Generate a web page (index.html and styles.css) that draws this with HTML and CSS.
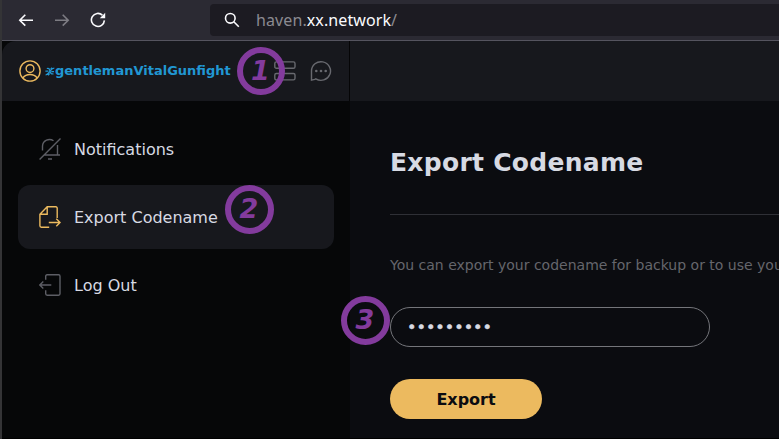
FILE: index.html
```html
<!DOCTYPE html>
<html lang="en">
<head>
<meta charset="utf-8">
<title>Export Codename</title>
<link rel="stylesheet" href="styles.css">
</head>
<body>
<div class="window">
  <header class="toolbar">
    <nav class="history">
      <svg class="nav-icon" viewBox="0 0 16 16"><path d="M15 8.2H2M7.3 2.8 1.8 8.2l5.5 5.4"/></svg>
      <svg class="nav-icon nav-icon-off" viewBox="0 0 16 16"><path d="M1 8.2h13M8.7 2.8l5.5 5.4-5.5 5.4"/></svg>
      <svg class="nav-icon" viewBox="0 0 16 16"><path d="M14.4 8.4A6.5 6.5 0 1 1 12.4 3.2"/><path class="solid" d="M15.200.8v5.400H9.800z"/></svg>
    </nav>
    <div class="address">
      <svg class="search-icon" viewBox="0 0 16 16"><circle cx="6.3" cy="6.300" r="4.800"/><path d="m9.800 9.800 5 4.900"/></svg>
      <span class="url">haven.<span class="host">xx.network</span>/</span>
    </div>
  </header>
  <div class="app">
    <aside class="sidebar">
      <div class="account">
        <svg class="icon gold" viewBox="0 0 22 22"><circle cx="11" cy="11" r="10.1"/><circle cx="11" cy="8.6" r="3.9"/><path d="M3.9 17.8c1.6-2.2 4-3.3 7.1-3.3s5.500 1.100 7.100 3.300"/></svg>
        <svg class="brand" viewBox="0 0 10 9"><path d="M1.800 1.500c2.500-.8 2.700.6 3.200 2.700.5 2.200 1.300 3.200 3.500 2.600M9.300 1.200C7.200 1.200 6 3 4.800 4.400 3.600 5.900 2.500 7.800.6 7.800M.4 4.200h3M6.300 4.600H9M3 8.300l1.600-1.800M5.600 2.300 7 .6"/></svg>
        <span class="codename">gentlemanVitalGunfight</span>
        <svg class="icon spaces" viewBox="0 0 22 22"><rect x=".8" y="1.900" width="20.200" height="6.400" rx="1.600"/><rect x=".8" y="13.500" width="20.200" height="6.400" rx="1.600"/></svg>
        <svg class="icon chat" viewBox="0 0 22 22"><path d="M1.500 20.200V11a9.500 9.300 0 1 1 4.300 7.800l-1 .6z"/><g class="dots"><circle cx="6.300" cy="11" r="1.300"/><circle cx="11" cy="11" r="1.300"/><circle cx="15.700" cy="11" r="1.300"/></g></svg>
      </div>
      <nav class="menu">
        <a class="item"><svg class="icon" viewBox="0 0 22 22"><path d="M.6 21.500 21.500.6M3.500 12.500V8a7 7 0 0 1 11-5.200M18.500 7v9.700M5.500 17h15.500M9 21h4"/></svg>Notifications</a>
        <a class="item active"><svg class="icon gold" viewBox="0 0 22 22"><path d="M18.200 12V2.200Q18.200.8 16.800.8H8.200L.9 8.200v11.600q0 1.400 1.400 1.400h7.900M8.200.8v7.400H.9M9.800 16.500h11.200M17.300 12.800l3.700 3.700-3.700 3.700"/></svg>Export Codename</a>
        <a class="item"><svg class="icon" viewBox="0 0 22 22"><path d="M6.700 5.800V2.200Q6.700.8 8.100.8h11.500q1.400 0 1.400 1.400v17.600q0 1.400-1.400 1.400H8.100q-1.400 0-1.400-1.400v-3.600M12.300 11H1M4.300 7.500.8 11l3.500 3.500"/></svg>Log Out</a>
      </nav>
    </aside>
    <main class="content">
      <div class="content-bar"></div>
      <section class="panel">
        <h1>Export Codename</h1>
        <p>You can export your codename for backup or to use your</p>
        <div class="password">•••••••••</div>
        <button class="export" type="button">Export</button>
      </section>
    </main>
  </div>
  <span class="badge step-one">1</span>
  <span class="badge step-two">2</span>
  <span class="badge step-three">3</span>
</div>
</body>
</html>
```
FILE: styles.css
```css
* { box-sizing: border-box; }
body { margin: 0; background: #000; font-family: "DejaVu Sans", sans-serif; }
svg { fill: none; stroke: currentColor; flex: none; }
.window { position: relative; height: 439px; overflow: hidden; border-left: 2px solid #343436; display: flex; flex-direction: column; }
.toolbar { height: 41px; flex: none; background: #2b2a33; border-bottom: 1px solid #55545f; display: flex; }
.history { width: 208px; display: flex; gap: 20px; padding: 12px 0 0 16px; color: #fbfbfe; }
.nav-icon, .search-icon { display: block; width: 16px; height: 16px; stroke-width: 1.6; }
.nav-icon-off { color: #7d7c83; }
.solid { fill: currentColor; stroke: none; }
.address { flex: 1; height: 32px; margin-top: 4px; border-radius: 4px 0 0 4px; background: #1c1b22; display: flex; align-items: center; padding-left: 14px; color: #fbfbfe; }
.url { margin-left: 16px; font: 16px/32px "Noto Sans", sans-serif; letter-spacing: 0.1px; color: #8b8a91; white-space: nowrap; }
.host { color: #fbfbfe; }

.app { flex: 1; display: flex; min-height: 0; margin-bottom: 1px; background: #0b0c10; }
.sidebar { width: 348px; flex: none; background: #060708; }
.account { height: 60px; background: #17181d; border-right: 1px solid #050506; border-top-left-radius: 14px; display: flex; align-items: center; padding-left: 17px; color: #68696f; }
.icon { width: 22px; height: 22px; stroke-width: 1.4; }
.gold { color: #ecba5f; }
.brand { width: 10px; height: 9px; margin-left: 4px; stroke-width: 1.3; color: #2197d3; }
.codename { width: 177px; padding-bottom: 2px; color: #2197d3; font-size: 13px; font-weight: bold; white-space: nowrap; }
.spaces { margin-left: 42px; }
.chat { margin-left: 14px; }
.dots { fill: currentColor; stroke: none; }
.menu { padding: 16px; display: flex; flex-direction: column; gap: 4px; }
.item { height: 64px; display: flex; align-items: center; gap: 13px; padding-left: 21px; border-radius: 12px; font-size: 16px; color: #d7dae3; }
.item .icon { color: #5d5e65; }
.active { background: #17181d; }
.active .icon { color: #ecba5f; }

.content { flex: 1; min-width: 0; overflow: hidden; }
.content-bar { height: 60px; background: #17181d; }
.panel { padding: 40px 0 0 40px; }
h1 { margin: 0; height: 74px; border-bottom: 1px solid #2f3036; font-size: 25px; line-height: 44px; letter-spacing: 0.28px; color: #d7dae3; white-space: nowrap; }
p { margin: 40px 0 0; font-size: 14px; line-height: 21px; color: #65666c; white-space: nowrap; }
.password { width: 320px; height: 40px; margin-top: 31px; border: 1px solid #74757a; border-radius: 20px; padding-left: 16px; font-size: 16px; line-height: 39px; color: #d7dae3; -webkit-text-stroke: 0.4px #d7dae3; }
.export { display: block; width: 152px; height: 40px; margin-top: 32px; padding: 0; border: 0; border-radius: 20px; background: #ecba5f; color: #0b0c10; font: bold 16px "DejaVu Sans", sans-serif; }

.badge { position: absolute; width: 49px; height: 49px; border: 6px solid #833b9d; border-radius: 50%; color: #833b9d; font: italic bold 27px/36px "DejaVu Sans", sans-serif; text-align: center; text-indent: -1px; }
.step-one { width: 48px; height: 48px; left: 235px; top: 47px; line-height: 35px; }
.step-two { left: 223px; top: 185px; }
.step-three { left: 339px; top: 296px; }
```
